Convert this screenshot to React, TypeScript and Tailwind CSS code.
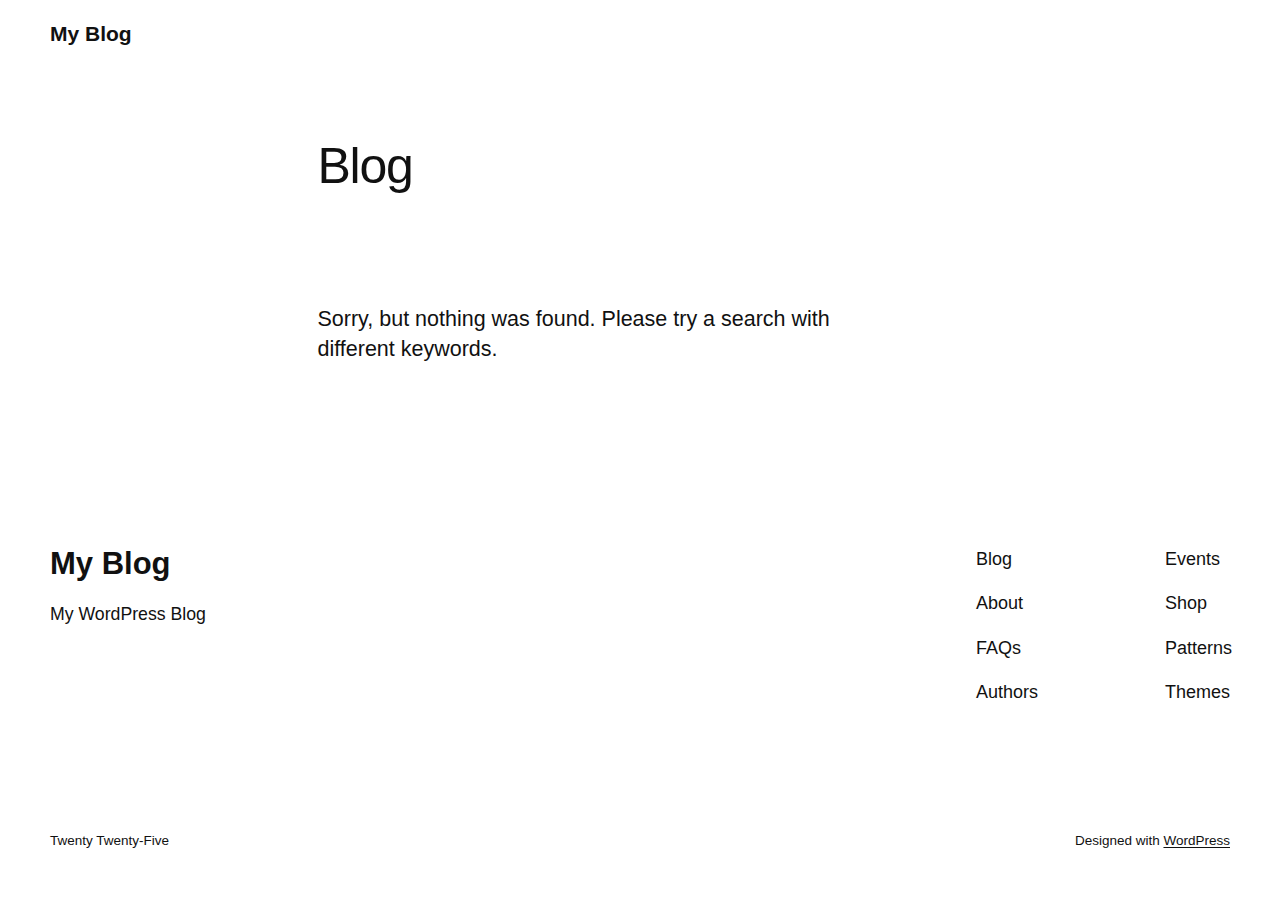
export default function App() {
  const navLeft = ['Blog', 'About', 'FAQs', 'Authors'];
  const navRight = ['Events', 'Shop', 'Patterns', 'Themes'];

  return (
    <div className="min-h-[900px] bg-white text-[#111111] font-['Liberation_Sans',Arial,sans-serif]">
      {/* Header */}
      <header className="px-[50px] pt-[20px]">
        <a href="#" className="text-[21px] leading-[28px] font-bold">My Blog</a>
      </header>

      {/* Main */}
      <main className="pt-[88px]">
        <div className="w-[645px] mx-auto">
          <h1 className="text-[50px] leading-[60px] font-light tracking-[-0.025em]">Blog</h1>
          <p className="mt-[108px] max-w-[560px] text-[21.5px] leading-[30px] font-light">
            Sorry, but nothing was found. Please try a search with different keywords.
          </p>
        </div>
      </main>

      {/* Footer */}
      <footer className="px-[50px] pt-[181px]">
        <div className="flex justify-between items-start">
          <div>
            <h2 className="text-[31px] leading-[38px] font-bold">My Blog</h2>
            <p className="mt-[18px] text-[17.7px] leading-[27px] font-light">My WordPress Blog</p>
          </div>
          <nav className="flex w-[254px] shrink-0 pt-[1px]">
            <ul className="w-[189px] shrink-0 flex flex-col gap-[17.3px] text-[18px] leading-[27px]">
              {navLeft.map((item) => (
                <li key={item}><a href="#">{item}</a></li>
              ))}
            </ul>
            <ul className="shrink-0 flex flex-col gap-[17.3px] text-[18px] leading-[27px]">
              {navRight.map((item) => (
                <li key={item}><a href="#">{item}</a></li>
              ))}
            </ul>
          </nav>
        </div>

        <div className="mt-[124px] flex justify-between text-[13.5px] leading-[21px]">
          <p>Twenty Twenty-Five</p>
          <p>
            Designed with <a href="#" className="underline underline-offset-2">WordPress</a>
          </p>
        </div>
      </footer>
    </div>
  );
}
